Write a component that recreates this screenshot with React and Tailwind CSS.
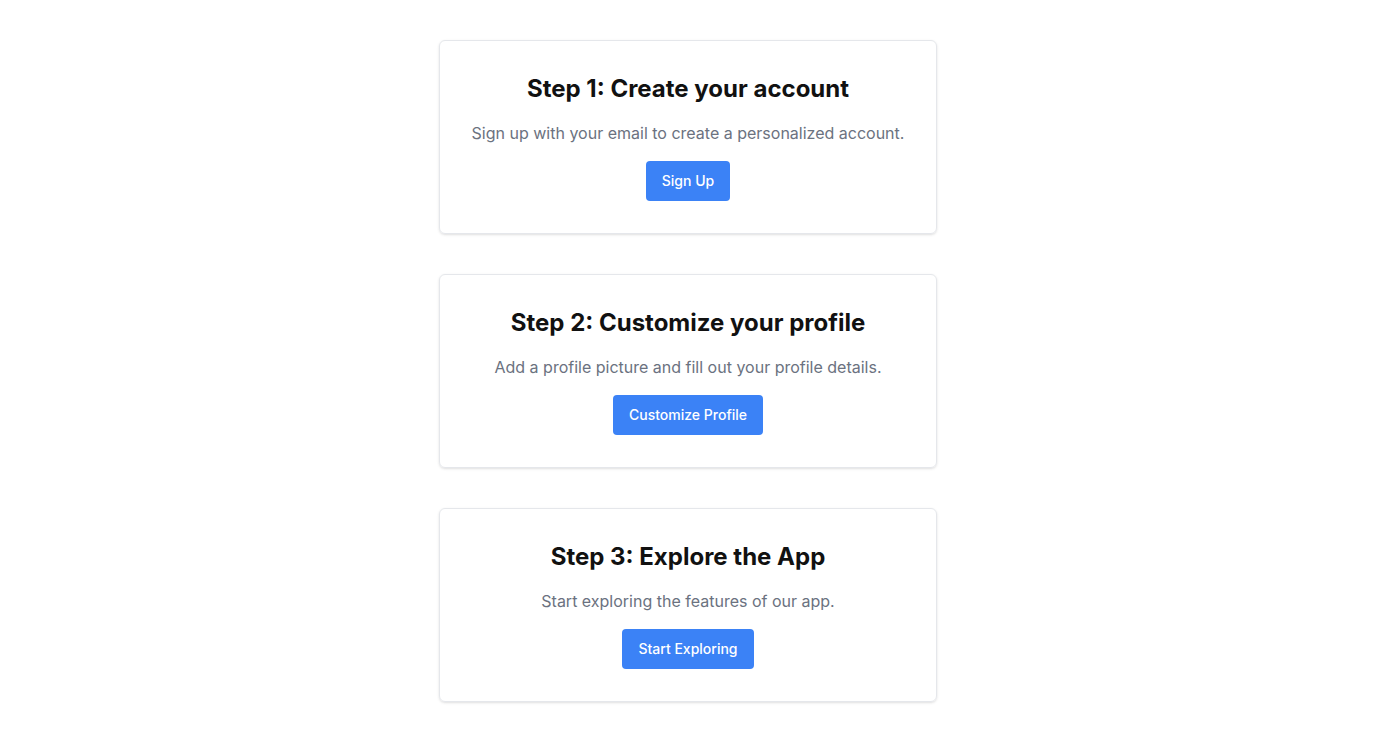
import React from 'react';

const steps = [
  { title: 'Step 1: Create your account', text: 'Sign up with your email to create a personalized account.', cta: 'Sign Up' },
  { title: 'Step 2: Customize your profile', text: 'Add a profile picture and fill out your profile details.', cta: 'Customize Profile' },
  { title: 'Step 3: Explore the App', text: 'Start exploring the features of our app.', cta: 'Start Exploring' },
];

export default function App() {
  return (
    <div className="min-h-screen bg-white font-['Inter',sans-serif] py-10">
      <div className="w-[498px] mx-auto flex flex-col gap-10">
        {steps.map((s) => (
          <div key={s.title} className="border border-[#e5e7eb] rounded-md shadow-sm px-6 py-8 flex flex-col items-center text-center">
            <h2 className="text-2xl font-bold text-[#111]">{s.title}</h2>
            <p className="mt-4 text-base text-[#6b7280] whitespace-nowrap">{s.text}</p>
            <button className="mt-4 h-10 px-4 rounded bg-[#3b82f6] text-white text-sm font-medium">
              {s.cta}
            </button>
          </div>
        ))}
      </div>
    </div>
  );
}
